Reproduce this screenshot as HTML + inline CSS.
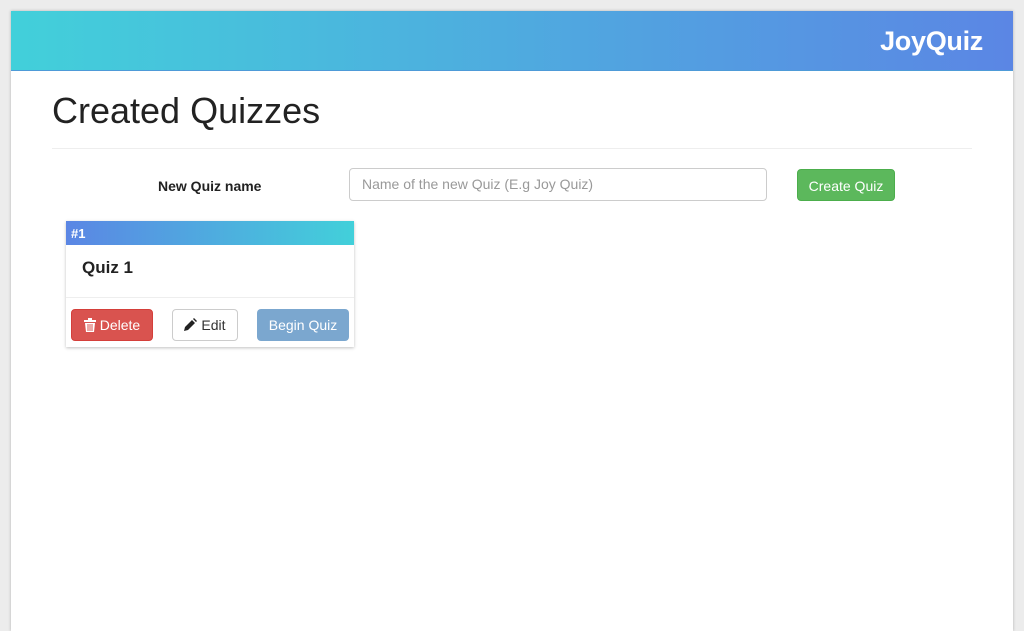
<!DOCTYPE html>
<html><head><style>
body{margin:0;background:#ececec;font-family:"Liberation Sans",sans-serif;width:1024px;height:612px;overflow:hidden;position:relative}
.win{position:absolute;left:11px;top:11px;width:1002px;height:620px;background:#fff;box-shadow:0 0 3px rgba(0,0,0,.25)}
.hdr{height:59px;background:linear-gradient(90deg,#42d0da,#5b86e4);position:relative;border-bottom:1px solid #4e9bd8}
.hdr span{position:absolute;right:30px;top:15px;color:#fff;font-weight:bold;font-size:27px;letter-spacing:-0.3px}
h1{position:absolute;left:41px;top:79px;margin:0;font-weight:normal;font-size:36px;color:#222}
.hr{position:absolute;left:41px;top:137px;width:920px;border-top:1px solid #eee}
.lbl{position:absolute;left:147px;top:167px;font-weight:bold;font-size:14px;color:#222}
.inp{position:absolute;left:338px;top:157px;width:404px;height:31px;border:1px solid #ccc;border-radius:4px;font-size:14px;color:#999;line-height:31px;padding-left:12px}
.btn{position:absolute;border-radius:4px;font-size:14px;color:#fff;text-align:center;box-sizing:border-box}
.card{position:absolute;left:55px;top:210px;width:288px;height:126px;background:#fff;box-shadow:0 1px 3px rgba(0,0,0,.25)}
.ch{height:24px;background:linear-gradient(90deg,#5b86e4,#42d0da);color:#fff;font-weight:bold;font-size:13px;line-height:26px;padding-left:5px}
.ct{position:absolute;left:16px;top:37px;font-weight:bold;font-size:17px;color:#222}
.cl{position:absolute;left:0;top:76px;width:288px;border-top:1px solid #eee}
</style></head><body>
<div class="win">
<div class="hdr"><span>JoyQuiz</span></div>
<h1>Created Quizzes</h1>
<div class="hr"></div>
<div class="lbl">New Quiz name</div>
<div class="inp">Name of the new Quiz (E.g Joy Quiz)</div>
<div class="btn" style="left:786px;top:158px;width:98px;height:32px;line-height:32px;background:#5cb85c;border:1px solid #4cae4c">Create Quiz</div>
<div class="card">
<div class="ch">#1</div>
<div class="ct">Quiz 1</div>
<div class="cl"></div>
<div class="btn" style="left:5px;top:88px;width:82px;height:32px;line-height:30px;background:#d9534f;border:1px solid #d43f3a"><svg width="12" height="14" viewBox="0 0 12 14" style="vertical-align:-2px"><rect x="0" y="2" width="12" height="2" fill="#fff"/><rect x="4" y="0" width="4" height="2" fill="#fff"/><path d="M1 5h10l-1 9H2z" fill="#fff"/><path d="M4 6v7M6 6v7M8 6v7" stroke="#d9534f"/></svg> Delete</div>
<div class="btn" style="left:106px;top:88px;width:66px;height:32px;line-height:30px;background:#fff;border:1px solid #ccc;color:#333"><svg width="13" height="13" viewBox="0 0 13 13" style="vertical-align:-1px"><path d="M0 13l1-4 7-7 3 3-7 7zM9 1l1-1 3 3-1 1z" fill="#222"/></svg> Edit</div>
<div class="btn" style="left:191px;top:88px;width:92px;height:32px;line-height:32px;background:#7ba7cf">Begin Quiz</div>
</div>
</div>
</body></html>
